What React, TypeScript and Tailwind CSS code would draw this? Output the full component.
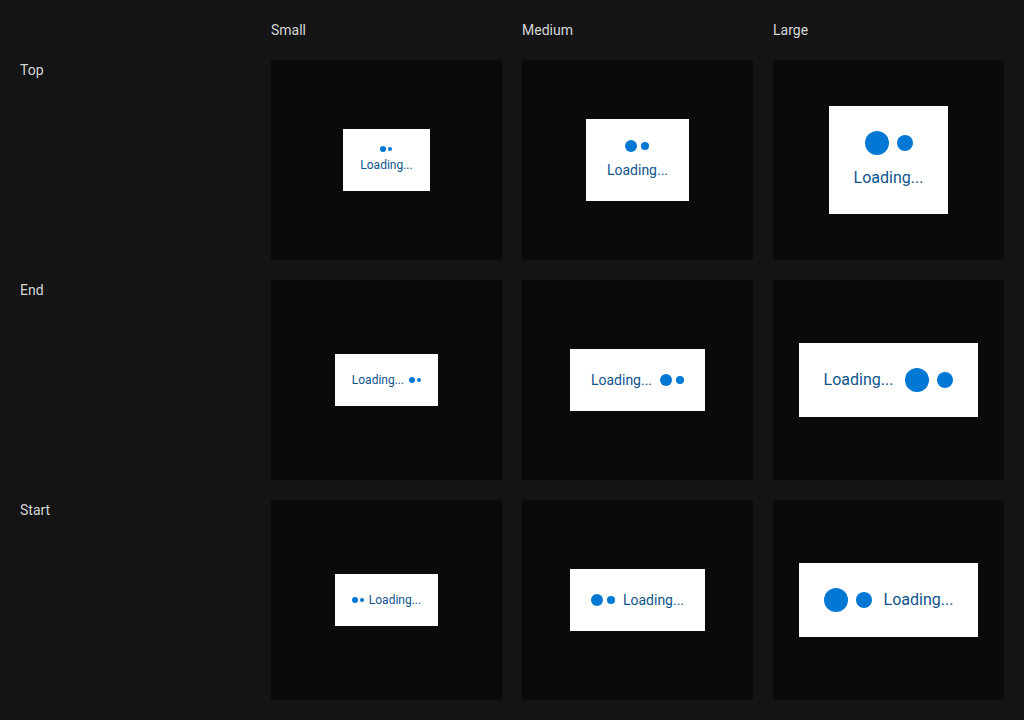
type Size = "small" | "medium" | "large";
type Position = "top" | "end" | "start";

const sizes: Record<
  Size,
  { pad: string; big: string; small: string; dotGap: string; text: string; vGap: string; hGap: string }
> = {
  small: {
    pad: "p-[17px]",
    big: "w-[6px] h-[6px]",
    small: "w-[4px] h-[4px]",
    dotGap: "gap-[2px]",
    text: "text-[12px] leading-[18px]",
    vGap: "gap-[4px]",
    hGap: "gap-[5px]",
  },
  medium: {
    pad: "p-[21px]",
    big: "w-[12px] h-[12px]",
    small: "w-[8px] h-[8px]",
    dotGap: "gap-[4px]",
    text: "text-[14px] leading-[20px]",
    vGap: "gap-[8px]",
    hGap: "gap-[8px]",
  },
  large: {
    pad: "p-[25px]",
    big: "w-[24px] h-[24px]",
    small: "w-[16px] h-[16px]",
    dotGap: "gap-[8px]",
    text: "text-[16px] leading-[22px]",
    vGap: "gap-[12px]",
    hGap: "gap-[12px]",
  },
};

function Dots({ size }: { size: Size }) {
  const s = sizes[size];
  return (
    <div className={`flex items-center ${s.dotGap}`}>
      <span className={`${s.big} rounded-full bg-[#0078d4]`} />
      <span className={`${s.small} rounded-full bg-[#0078d4]`} />
    </div>
  );
}

function Loader({ size, position }: { size: Size; position: Position }) {
  const s = sizes[size];
  const label = <span className={`${s.text} text-[#0f548c]`}>Loading...</span>;
  if (position === "top") {
    return (
      <div className={`bg-white ${s.pad} flex flex-col items-center ${s.vGap}`}>
        <Dots size={size} />
        {label}
      </div>
    );
  }
  return (
    <div className={`bg-white ${s.pad} flex items-center ${s.hGap}`}>
      {position === "start" && <Dots size={size} />}
      {label}
      {position === "end" && <Dots size={size} />}
    </div>
  );
}

const rows: { name: string; position: Position }[] = [
  { name: "Top", position: "top" },
  { name: "End", position: "end" },
  { name: "Start", position: "start" },
];

const cols: { name: string; size: Size }[] = [
  { name: "Small", size: "small" },
  { name: "Medium", size: "medium" },
  { name: "Large", size: "large" },
];

export default function App() {
  return (
    <div
      className="min-h-[720px] bg-[#141414] p-5 text-[14px] leading-5 text-[#d6d6d6]"
      style={{ fontFamily: "Roboto, 'Liberation Sans', sans-serif" }}
    >
      <div className="grid grid-cols-[231px_231px_231px_231px] grid-rows-[20px_200px_200px_200px] gap-5">
        <div />
        {cols.map((c) => (
          <div key={c.name}>{c.name}</div>
        ))}
        {rows.map((r) => (
          <>
            <div key={r.name}>{r.name}</div>
            {cols.map((c) => (
              <div
                key={r.name + c.name}
                className="bg-[#0a0a0a] flex items-center justify-center"
              >
                <Loader size={c.size} position={r.position} />
              </div>
            ))}
          </>
        ))}
      </div>
    </div>
  );
}
